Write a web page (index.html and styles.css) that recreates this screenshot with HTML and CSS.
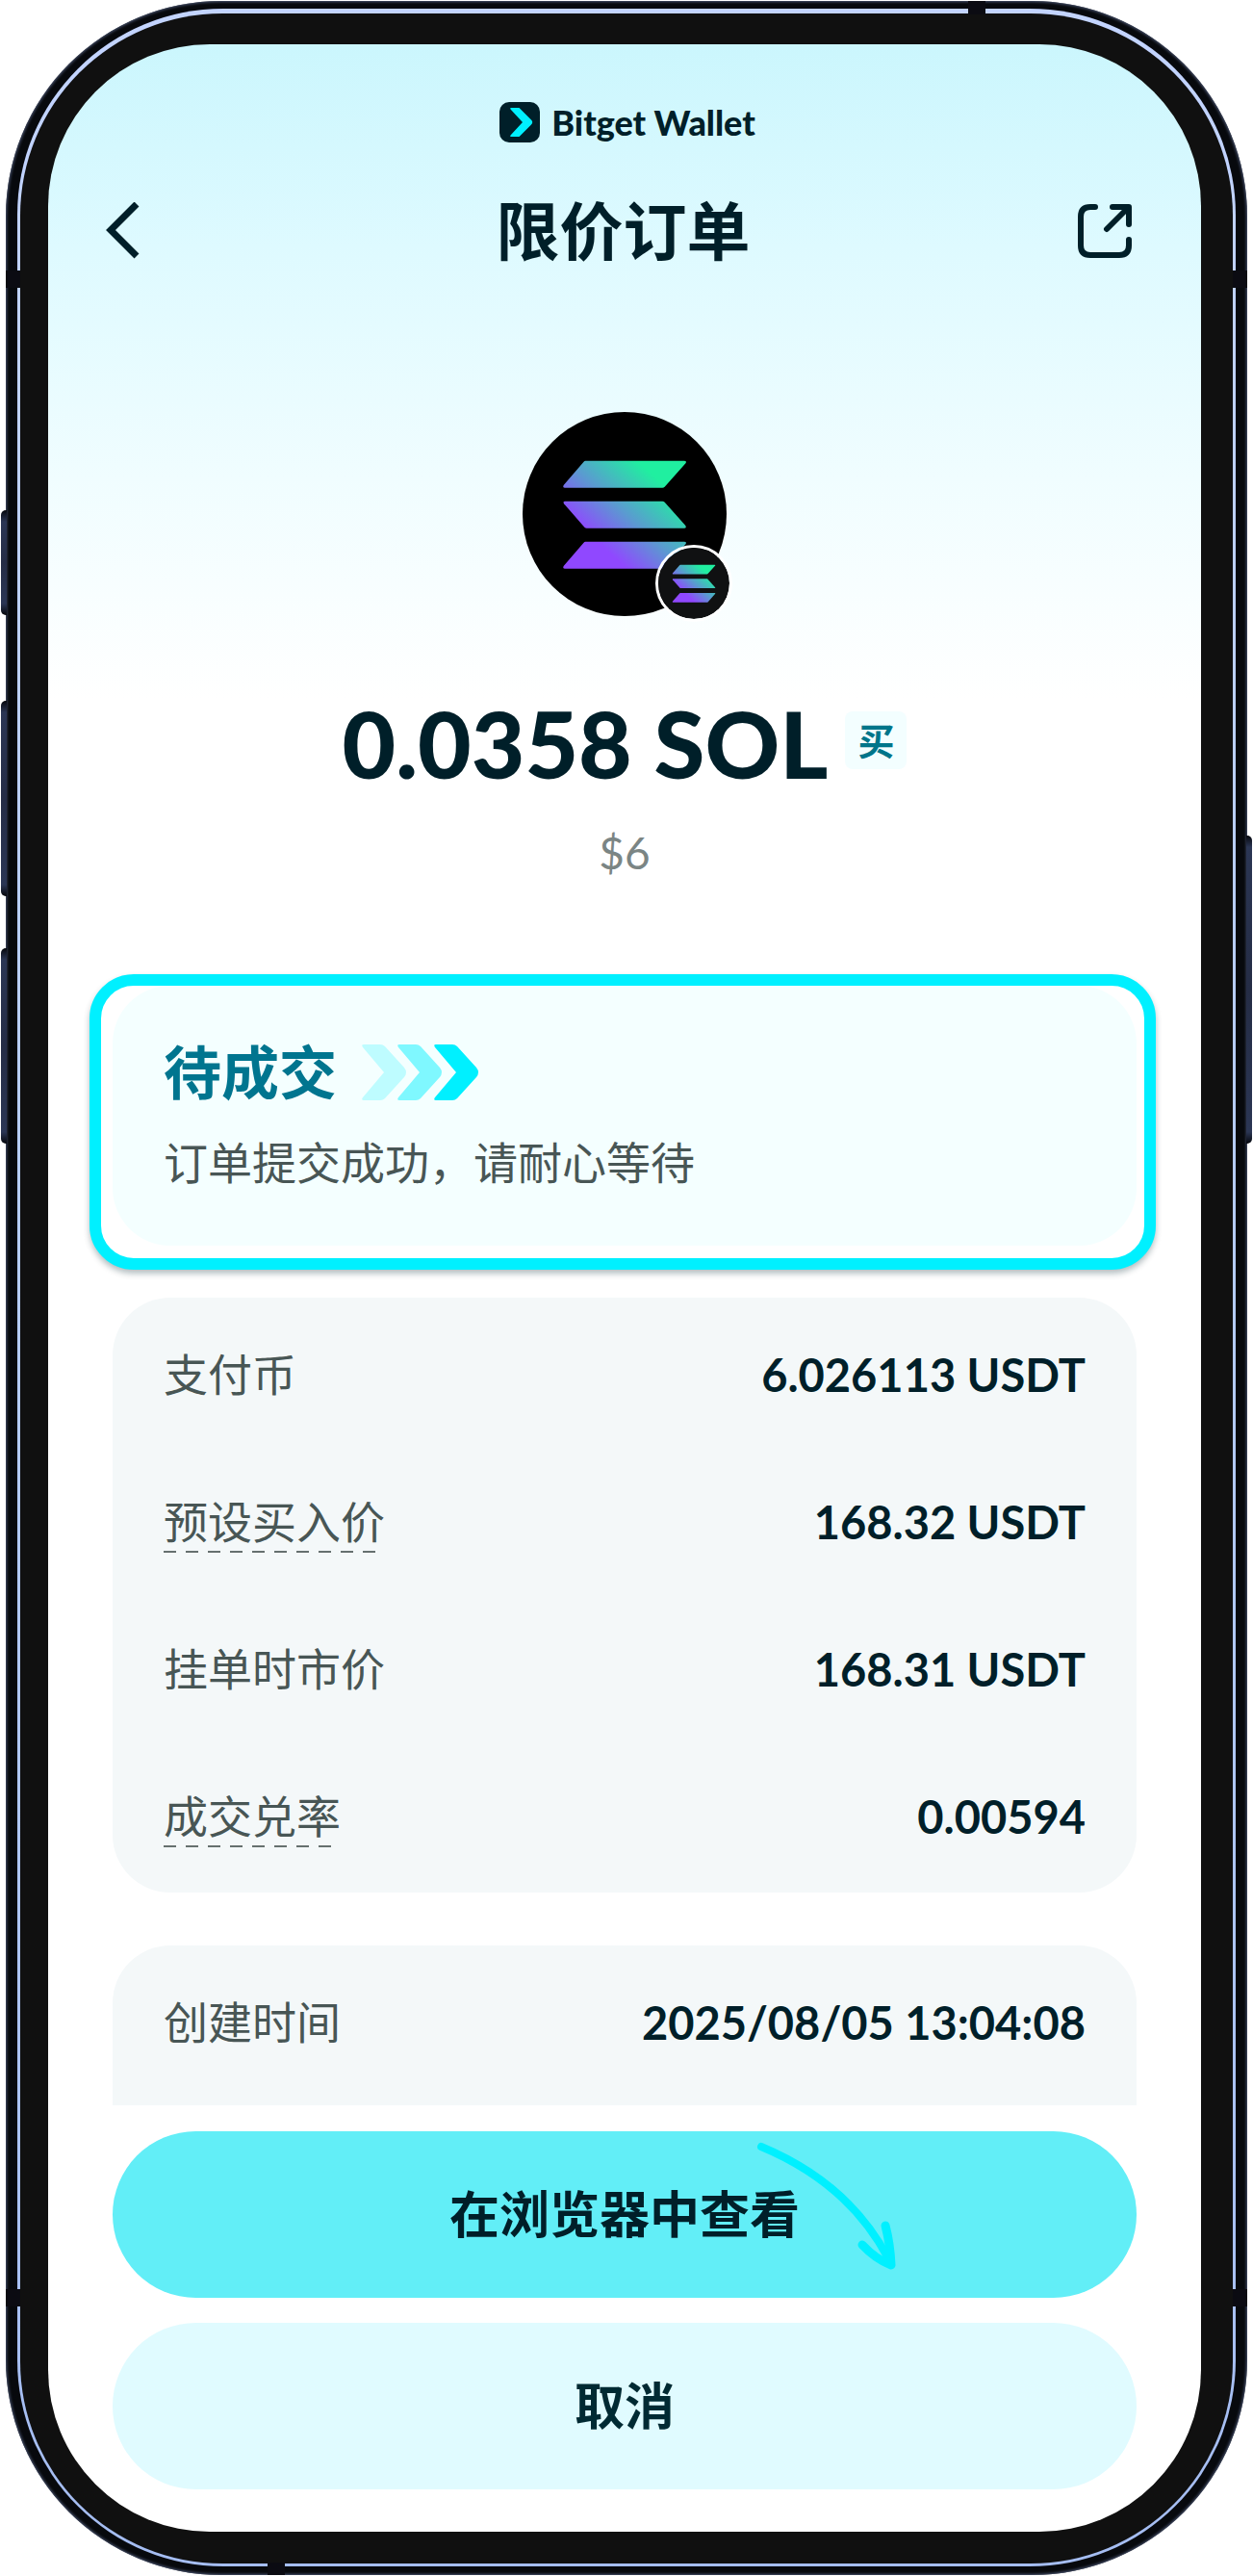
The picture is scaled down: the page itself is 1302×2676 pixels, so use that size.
FILE: index.html
```html
<!DOCTYPE html>
<html lang="zh-CN">
<head>
    <meta charset="UTF-8">
    <meta name="viewport" content="width=device-width, initial-scale=1.0">
    <title>限价订单 - Bitget Wallet</title>
    <link rel="stylesheet" href="styles.css">
</head>
<body>

<div class="phone">
    <!-- 侧边按键 -->
    <span class="key key-action"></span>
    <span class="key key-up"></span>
    <span class="key key-down"></span>
    <span class="key key-power"></span>

    <div class="rim">
        <div class="bezel">
            <div class="screen">
                <div class="brand">
                    <svg class="brand-logo" viewBox="0 0 42 42" aria-hidden="true">
                        <rect width="42" height="42" rx="10" fill="#001f29"/>
                        <path d="M12 6h8.500l12.500 12.500q2.500 2.500 0 5l-12.500 12.500h-8.500q-1.500 0-.5-1.500L24 21 11.500 7.500Q10.500 6 12 6z" fill="#00f0ff"/>
                    </svg>
                    <span>Bitget Wallet</span>
                </div>

                <header class="topbar">
                    <a class="icon-link" href="#" aria-label="返回">
                        <svg width="36" height="60" viewBox="0 0 36 60" fill="none" stroke="#001f29" stroke-width="7">
                            <path d="M33 2 6 29l27 27"/>
                        </svg>
                    </a>
                    <h1>限价订单</h1>
                    <a class="icon-link" href="#" aria-label="分享">
                        <svg width="56" height="56" viewBox="0 0 56 56" fill="none" stroke="#001f29" stroke-width="6" stroke-linecap="round" stroke-linejoin="round">
                            <path d="M18 3h-5Q3 3 3 13v30q0 10 10 10h30q10 0 10-10v-6M36 3h17v18M52 4 30 26"/>
                        </svg>
                    </a>
                </header>

                <section class="summary">
                    <div class="coin">
                        <svg viewBox="0 0 636 636" aria-hidden="true">
                            <defs>
                                <linearGradient id="sol" gradientUnits="userSpaceOnUse" x1="180" y1="470" x2="460" y2="160">
                                    <stop offset="0.200" stop-color="#9048ff"/>
                                    <stop offset="0.500" stop-color="#5a9bd0"/>
                                    <stop offset="0.850" stop-color="#20efa0"/>
                                </linearGradient>
                            </defs>
                            <circle cx="318" cy="318" r="318"/>
                            <g id="sol-bars" fill="url(#sol)">
                                <path d="M196 152h308q8 0 5 7l-66 74q-3 3-7 3H132q-8 0-4-8l62-72q3-4 6-4z"/>
                                <path d="M132 278h304q4 0 7 3l65 73q4 8-4 8H200q-4 0-7-3l-64-73q-4-8 3-8z"/>
                                <path d="M196 404h308q8 0 5 7l-66 74q-3 3-7 3H132q-8 0-4-8l62-72q3-4 6-4z"/>
                            </g>
                        </svg>
                        <svg class="coin-chain" viewBox="0 0 636 636" aria-hidden="true">
                            <circle cx="318" cy="318" r="318" fill="#101112"/>
                            <use href="#sol-bars"/>
                        </svg>
                    </div>
                    <div class="amount">
                        <strong>0.0358 SOL</strong>
                        <span class="tag">买</span>
                    </div>
                    <div class="fiat">$6</div>
                </section>

                <section class="status">
                    <div class="status-body">
                        <h2>待成交
                            <svg width="122" height="58" viewBox="0 0 122 58" fill="#00f0ff" aria-hidden="true">
                                <path opacity="0.220" d="M2 0h17q3 0 5 2l20 22q4 5 0 10L24 56q-2 2-5 2H2q-3 0-1-3l22-26L1 3Q-1 0 2 0z"/>
                                <path opacity="0.480" transform="translate(37)" d="M2 0h17q3 0 5 2l20 22q4 5 0 10L24 56q-2 2-5 2H2q-3 0-1-3l22-26L1 3Q-1 0 2 0z"/>
                                <path transform="translate(75)" d="M2 0h17q3 0 5 2l20 22q4 5 0 10L24 56q-2 2-5 2H2q-3 0-1-3l22-26L1 3Q-1 0 2 0z"/>
                            </svg>
                        </h2>
                        <p>订单提交成功，请耐心等待</p>
                    </div>
                </section>

                <dl class="card">
                    <div class="row"><dt>支付币</dt><dd>6.026113 USDT</dd></div>
                    <div class="row"><dt><span class="hint">预设买入价</span></dt><dd>168.32 USDT</dd></div>
                    <div class="row"><dt>挂单时市价</dt><dd>168.31 USDT</dd></div>
                    <div class="row"><dt><span class="hint">成交兑率</span></dt><dd>0.00594</dd></div>
                </dl>

                <dl class="card card-cut">
                    <div class="row"><dt>创建时间</dt><dd>2025/08/05 13:04:08</dd></div>
                </dl>

                <div class="actions">
                    <button type="button" class="btn btn-primary">在浏览器中查看</button>
                    <button type="button" class="btn">取消</button>
                    <svg class="pointer" width="150" height="150" viewBox="0 0 150 150" fill="none" stroke="#00f0ff" stroke-linecap="round" stroke-linejoin="round" aria-hidden="true">
                        <path d="M8 10Q99 48 140 126" stroke-width="8"/>
                        <path d="M113 112q14 15 30 21-1-22-6-41" stroke-width="9"/>
                    </svg>
                </div>
            </div>
        </div>
    </div>

    <!-- 天线条 -->
    <span class="band band-top"></span>
    <span class="band band-left"></span>
    <span class="band band-right"></span>
    <span class="band band-left band-low"></span>
    <span class="band band-right band-low"></span>
    <span class="band band-bottom"></span>
</div>

</body>
</html>
```
FILE: styles.css
```css
* {
    box-sizing: border-box;
}
body {
    margin: 0;
    padding: 1px 6px 2px;
    background-color: #fff;
    color: #001f29;
    font-family: Lato, "Noto Sans CJK SC", sans-serif;
}
h1, h2, p, dl, dd {
    margin: 0;
}

/* 机身 */
.phone {
    position: relative;
    padding: 8px 12px 9px;
    border-radius: 224px;
    background-color: #07090d;
    box-shadow: inset 0 0 3px 1px #4b5673;
}
.rim {
    padding: 5px 3px 3px;
    border-radius: 214px;
    background: linear-gradient(#c3d4ff, #b4ccf8 50%, #a5bdf2);
}
.bezel {
    padding: 32px 33px 33px 29px;
    border-radius: 210px;
    background-color: #101010;
}
.screen {
    padding: 56px 67px 44px;
    border-radius: 168px;
    background: linear-gradient(#cbf6fd, #defaff 210px, #f0fdff 450px, #fff 680px);
}
.key {
    position: absolute;
    left: -5px;
    width: 6px;
    border-radius: 5px 0 0 5px;
    background: linear-gradient(#05070c, #2b3654 12px, #252d46 50%, #2b3654 calc(100% - 12px), #05070c);
}
.key-action {
    top: 529px;
    height: 109px;
}
.key-up {
    top: 727px;
    height: 203px;
}
.key-down {
    top: 984px;
    height: 203px;
}
.key-power {
    top: 867px;
    right: -5px;
    left: auto;
    height: 320px;
    border-radius: 0 5px 5px 0;
}
.band {
    position: absolute;
    width: 15px;
    height: 18px;
    background-color: #0b0b12;
}
.band-top {
    top: 0;
    left: 1000px;
    width: 18px;
    height: 14px;
}
.band-bottom {
    bottom: 0;
    left: 272px;
    width: 18px;
    height: 13px;
}
.band-left {
    top: 280px;
    left: 0;
}
.band-right {
    top: 280px;
    right: 0;
}
.band-low {
    top: auto;
    bottom: 279px;
}

/* 顶部 */
.brand {
    display: flex;
    justify-content: center;
    align-items: center;
    gap: 12px;
    height: 50px;
    padding-left: 6px;
    font-size: 36px;
    font-weight: 900;
}
.brand-logo {
    width: 42px;
    height: 42px;
}
.topbar {
    display: flex;
    justify-content: space-between;
    align-items: center;
    height: 90px;
    margin: 43px 5px 1px -8px;
}
.topbar h1 {
    padding-left: 10px;
    font-size: 66px;
    font-weight: 700;
    line-height: 90px;
}
.icon-link {
    display: flex;
    width: 56px;
}

/* 金额 */
.summary {
    display: flex;
    flex-direction: column;
    align-items: center;
    padding-top: 142px;
}
.coin {
    position: relative;
    width: 212px;
    height: 212px;
}
.coin svg {
    display: block;
}
.coin .coin-chain {
    position: absolute;
    right: -6px;
    bottom: -6px;
    width: 80px;
    height: 80px;
    border: 3px solid #fff;
    border-radius: 50%;
}
.amount {
    display: flex;
    align-items: center;
    gap: 18px;
    height: 120px;
    margin-top: 72px;
}
.amount strong {
    font-size: 96px;
    font-weight: 900;
    line-height: 120px;
}
.tag {
    margin-bottom: 6px;
    padding: 0 13px;
    border-radius: 8px;
    background-color: #f3feff;
    color: #00758a;
    font-size: 38px;
    font-weight: 700;
    line-height: 60px;
}
.fiat {
    margin-top: 24px;
    color: #7b8584;
    font-size: 46px;
    line-height: 60px;
}

/* 订单状态 */
.status {
    margin: 96px -20px 0 -24px;
    padding: 0 8px 13px 12px;
    border: 12px solid #00f0ff;
    border-radius: 46px;
    background-color: #fff;
    box-shadow: 0 4px 6px rgba(0, 40, 50, 0.3);
}
.status-body {
    padding: 50px 53px 54px;
    border-radius: 60px;
    background-color: #f4ffff;
}
.status h2 {
    display: flex;
    align-items: center;
    gap: 26px;
    color: #00758f;
    font-size: 60px;
    font-weight: 700;
    line-height: 80px;
}
.status p {
    margin-top: 22px;
    color: #485655;
    font-size: 46px;
    line-height: 64px;
}

/* 明细 */
.card {
    display: grid;
    gap: 89px;
    margin-top: 29px;
    padding: 48px 53px 47px;
    border-radius: 60px;
    background-color: #f4f8f9;
}
.card-cut {
    margin-top: 55px;
    padding-bottom: 54px;
    border-radius: 60px 60px 0 0;
}
.row {
    display: flex;
    justify-content: space-between;
    align-items: center;
    height: 64px;
    font-size: 46px;
    line-height: 64px;
}
.row dt {
    color: #485655;
}
.row dd {
    font-size: 47px;
    font-weight: 700;
}
.hint {
    display: block;
    background: repeating-linear-gradient(90deg, #66706f 0 13px, transparent 13px 23px) bottom / 100% 2px no-repeat;
}

/* 底部按钮 */
.actions {
    position: relative;
    display: grid;
    gap: 26px;
    margin-top: 27px;
}
.btn {
    height: 173px;
    padding: 0 0 6px;
    border: none;
    border-radius: 87px;
    background-color: #e0fbff;
    color: #002a33;
    font-family: inherit;
    font-size: 52px;
    font-weight: 700;
    cursor: pointer;
}
.btn-primary {
    background-color: #62eef7;
    color: #001f29;
}
.pointer {
    position: absolute;
    top: 6px;
    left: 666px;
    pointer-events: none;
}
```
